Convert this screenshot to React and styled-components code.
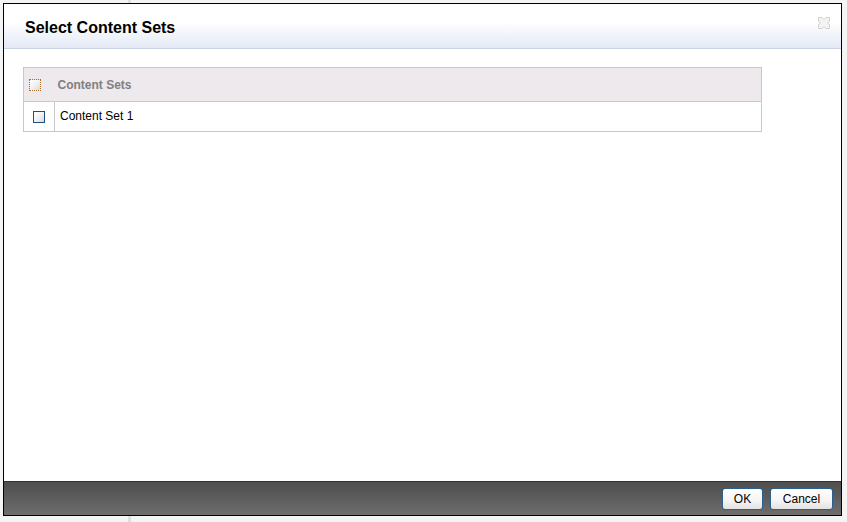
import React, { useState } from 'react'
import styled, { createGlobalStyle } from 'styled-components'

const GlobalStyle = createGlobalStyle`
  html, body {
    margin: 0;
    padding: 0;
    background: #f3f3f3;
  }
  #root {
    height: 522px;
  }
`

const Page = styled.div`
  height: 522px;
  padding: 3px 5px 6px 3px;
  box-sizing: border-box;
  background: linear-gradient(to right, #f4f4f4 0, #f4f4f4 128px, #dcdfe3 128px, #dcdfe3 131px, #f4f4f4 131px);
  font-family: "Liberation Sans", Arial, sans-serif;
`

const Dialog = styled.div`
  height: 100%;
  border: 1px solid #000;
  background: #fff;
  display: flex;
  flex-direction: column;
  box-sizing: border-box;
`

const Header = styled.div`
  height: 44px;
  border-bottom: 1px solid #c9d3e3;
  background: linear-gradient(to bottom, #ffffff 0%, #ffffff 40%, #e4e9f5 100%);
  display: flex;
  align-items: center;
  justify-content: space-between;
  padding: 0 10px 0 21px;
  flex-shrink: 0;
`

const Title = styled.h1`
  margin: 4px 0 0 0;
  font-size: 16px;
  font-weight: bold;
  color: #000;
`

const Close = styled.button`
  border: none;
  background: none;
  padding: 0;
  margin-top: -6px;
  width: 14px;
  height: 14px;
  cursor: pointer;
  display: flex;
`

const Body = styled.div`
  flex: 1;
  padding: 18px 79px 0 19px;
`

const Table = styled.table`
  width: 100%;
  border-collapse: collapse;
  border: 1px solid #c8c8c8;
  font-size: 12px;
`

const HeadRow = styled.tr`
  background: #eee9ec;
  height: 34px;
  border-bottom: 1px solid #c8c8c8;
`

const Row = styled.tr`
  height: 30px;
`

const CheckCell = styled.td`
  width: 31px;
  padding: 0 0 0 ${p => p.$head ? 5 : 9}px;
  box-sizing: border-box;
  border-right: ${p => p.$head ? 'none' : '1px solid #c8c8c8'};
  vertical-align: middle;
`

const HeadCell = styled.th`
  text-align: left;
  padding: 1px 0 0 3px;
  color: #808080;
  font-weight: bold;
`

const Cell = styled.td`
  padding: 0 0 2px 5px;
  color: #000;
`

const Box = styled.span`
  display: block;
  width: 10px;
  height: 10px;
  border: 1px ${p => p.$dotted ? 'dotted #b06a2a' : 'solid #1f4f7f'};
  background: ${p => p.$checked ? '#1f4f7f' : 'linear-gradient(135deg, #ffffff 0%, #f2f2f2 50%, #d8d8d8 100%)'};
  margin-top: ${p => p.$dotted ? 0 : 1}px;
  cursor: pointer;
`

const Footer = styled.div`
  height: 33px;
  border-top: 1px solid #333;
  background: linear-gradient(to bottom, #4e4e4e 0%, #5a5a5a 40%, #6e6e6e 100%);
  display: flex;
  justify-content: flex-end;
  align-items: center;
  gap: 7px;
  padding: 0 8px 0 0;
  flex-shrink: 0;
`

const Button = styled.button`
  height: 22px;
  width: ${p => p.$wide ? 63 : 41}px;
  border: 1px solid #2a5f8f;
  border-radius: 3px;
  background: linear-gradient(to bottom, #ffffff 0%, #f4f4f4 60%, #e2e2e2 100%);
  font-family: "Liberation Sans", Arial, sans-serif;
  font-size: 12px;
  color: #000;
  padding: 0;
  margin-top: 1px;
  cursor: pointer;
`

const CloseIcon = () => (
  <svg width="14" height="14" viewBox="0 0 14 14">
    <path
      d="M1.5 1.5 L5 1.5 L7 3.5 L9 1.5 L12.5 1.5 L12.5 5 L10.5 7 L12.5 9 L12.5 12.5 L9 12.5 L7 10.5 L5 12.5 L1.5 12.5 L1.5 9 L3.5 7 L1.5 5 Z"
      fill="#f4f4f4"
      stroke="#cfcfcf"
      strokeWidth="1"
    />
  </svg>
)

export default function App() {
  const [all, setAll] = useState(false)
  const [sets, setSets] = useState([{ name: 'Content Set 1', checked: false }])

  const toggle = i => {
    setSets(sets.map((s, j) => (j === i ? { ...s, checked: !s.checked } : s)))
  }

  return (
    <>
      <GlobalStyle />
      <Page>
        <Dialog>
          <Header>
            <Title>Select Content Sets</Title>
            <Close aria-label="Close"><CloseIcon /></Close>
          </Header>
          <Body>
            <Table>
              <thead>
                <HeadRow>
                  <CheckCell $head>
                    <Box $dotted $checked={all} onClick={() => setAll(!all)} />
                  </CheckCell>
                  <HeadCell>Content Sets</HeadCell>
                </HeadRow>
              </thead>
              <tbody>
                {sets.map((s, i) => (
                  <Row key={s.name}>
                    <CheckCell>
                      <Box $checked={s.checked} onClick={() => toggle(i)} />
                    </CheckCell>
                    <Cell>{s.name}</Cell>
                  </Row>
                ))}
              </tbody>
            </Table>
          </Body>
          <Footer>
            <Button>OK</Button>
            <Button $wide>Cancel</Button>
          </Footer>
        </Dialog>
      </Page>
    </>
  )
}
